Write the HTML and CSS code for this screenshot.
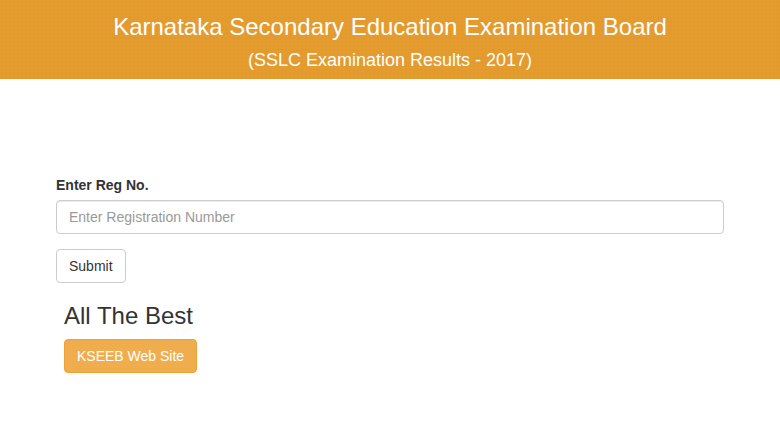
FILE: index.html
```html
<!DOCTYPE html>
<html>
<head>
<meta charset="utf-8">
<link rel="stylesheet" href="styles.css">
</head>
<body>
<header class="banner">
  <h1 class="banner-title">Karnataka Secondary Education Examination Board</h1>
  <p class="banner-sub">(SSLC Examination Results - 2017)</p>
</header>
<main class="content">
  <form class="reg-form">
    <label class="reg-label" for="reg">Enter Reg No.</label>
    <input class="reg-input" id="reg" type="text" placeholder="Enter Registration Number">
    <button class="btn-submit" type="button">Submit</button>
  </form>
  <section class="extra">
    <h3 class="best">All The Best</h3>
    <a class="btn-warning">KSEEB Web Site</a>
  </section>
</main>
</body>
</html>
```
FILE: styles.css
```css
* { box-sizing: border-box; }
body {
  margin: 0;
  font-family: "Liberation Sans", Arial, sans-serif;
  font-size: 14px;
  color: #333;
  background: #fff;
}
.banner {
  height: 79px;
  background-color: #e49c2f;
  background-image: radial-gradient(rgba(200,120,30,0.22) 0.6px, transparent 0.8px);
  background-size: 4px 4px;
  text-align: center;
  color: #fff;
  padding-top: 13px;
}
.banner-title {
  margin: 0;
  font-size: 24px;
  font-weight: normal;
  line-height: 28px;
}
.banner-sub {
  margin: 8px 0 0;
  font-size: 18px;
  line-height: 22px;
}
.content {
  padding: 96px 56px 0 56px;
}
.reg-form {
  display: flex;
  flex-direction: column;
  align-items: flex-start;
  width: 668px;
}
.reg-label {
  font-weight: bold;
  font-size: 14px;
  line-height: 20px;
  margin-bottom: 5px;
}
.reg-input {
  width: 668px;
  height: 34px;
  padding: 6px 12px;
  font-family: inherit;
  font-size: 14px;
  color: #555;
  border: 1px solid #ccc;
  border-radius: 4px;
  box-shadow: inset 0 1px 1px rgba(0,0,0,.075);
}
.reg-input::placeholder { color: #999; }
.btn-submit {
  margin-top: 15px;
  height: 34px;
  padding: 6px 12px;
  font-family: inherit;
  font-size: 14px;
  color: #333;
  background: #fff;
  border: 1px solid #ccc;
  border-radius: 4px;
}
.extra {
  padding-left: 8px;
  display: flex;
  flex-direction: column;
  align-items: flex-start;
}
.best {
  margin: 20px 0 10px;
  font-size: 24px;
  font-weight: 500;
  line-height: 26px;
  color: #333;
}
.btn-warning {
  display: inline-block;
  height: 34px;
  padding: 6px 12px;
  font-size: 14px;
  line-height: 20px;
  color: #fff;
  background: #f0ad4e;
  border: 1px solid #eea236;
  border-radius: 4px;
}
```
